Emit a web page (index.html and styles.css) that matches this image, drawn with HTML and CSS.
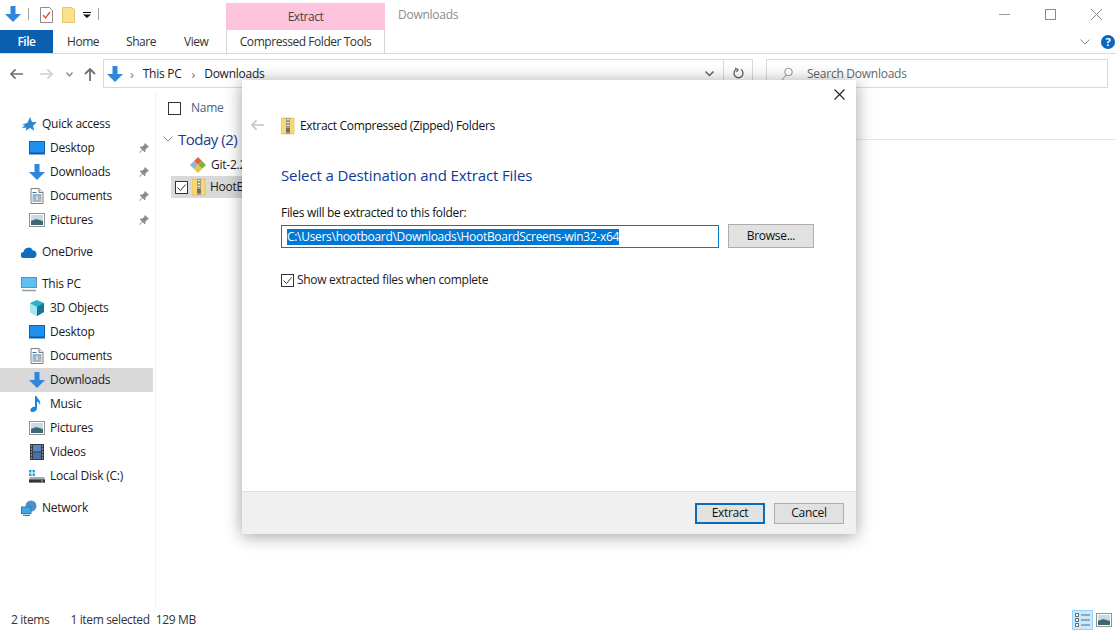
FILE: index.html
```html
<!DOCTYPE html>
<html lang="en">
<head>
<meta charset="utf-8">
<title>Downloads</title>
<link rel="stylesheet" href="styles.css">
</head>
<body>
<svg class="defs" width="0" height="0" aria-hidden="true">
  <symbol id="down" viewBox="0 0 16 16"><path d="M5.500 0h5v8H16l-8 8-8-8h5.500z" fill="#2f86dc"/></symbol>
  <symbol id="desktop" viewBox="0 0 16 14"><rect x=".5" y=".5" width="15" height="12.500" fill="#1e90f0" stroke="#0a62b4"/><rect x="1" y="11.500" width="14" height="1.500" fill="#0d5aa6"/></symbol>
  <symbol id="docs" viewBox="0 0 13 16"><path d="M.5.500h8l4 4v11H.5z" fill="#fff" stroke="#7f7f7f"/><path d="M8.500.500v4h4" fill="#e8e8e8" stroke="#7f7f7f"/><path d="M2 4.500h4M2 7h9M2 9h4M7 9h4M2 11h4M7 11h4M2 13h9" stroke="#3d6f94"/></symbol>
  <symbol id="pics" viewBox="0 0 16 14"><rect x=".5" y=".5" width="15" height="13" fill="#fff" stroke="#8f9499"/><rect x="2" y="2" width="12" height="10" fill="#c7dbe6"/><path d="M2 8l5-2 7 2v4H2z" fill="#3f6870"/></symbol>
  <symbol id="pin" viewBox="0 0 12 12"><path d="M7 1l4 4-1 .6-1 .2-1.700 2.200.2 1.500-.8.800L4.500 8 1.500 11 1 10.500 4 7.500 1.700 5.300l.8-.8 1.500.2L6.200 3 6.400 2z" fill="#8d8d8d"/></symbol>
  <symbol id="zip" viewBox="0 0 14 18"><path d="M0 1h13v16H0z" fill="#f8d775" stroke="#dcb64e" stroke-width=".6"/><rect x="5" y="1" width="4" height="16" fill="#a39c86"/><path d="M6 2h2v1H6zM6 5h2v1H6zM6 8h2v1H6z" fill="#eee"/><rect x="5" y="11" width="4" height="4" fill="#756f5e"/></symbol>
  <symbol id="back" viewBox="0 0 14 12"><path d="M6 1L1 6l5 5M1 6h13" fill="none" stroke="currentColor" stroke-width="1.800"/></symbol>
</svg>

<header class="titlebar">
  <div class="qat">
    <svg class="qat-down" width="16" height="16"><use href="#down"/></svg>
    <span class="qat-sep"></span>
    <svg class="qat-props" width="13" height="16" viewBox="0 0 13 16"><path d="M.5.500h9l3 3v12H.5z" fill="#fff" stroke="#8a8a8a"/><path d="M3 8l2.500 3L10 5" fill="none" stroke="#d9502a" stroke-width="1.300"/></svg>
    <svg class="qat-folder" width="13" height="16" viewBox="0 0 13 16"><path d="M.5.500h9l3 2v13H.5z" fill="#fbe08f" stroke="#e6c56a"/></svg>
    <svg class="qat-drop" width="8" height="6" viewBox="0 0 8 6"><path d="M0 0h8v1H0zM0 2.500h8L4 6z" fill="#111"/></svg>
    <span class="qat-sep second"></span>
  </div>
  <div class="context-tab">Extract</div>
  <div class="window-title">Downloads</div>
  <div class="controls">
    <svg width="11" height="11" viewBox="0 0 11 11"><path d="M0 5.500h11" stroke="#9a9a9a"/></svg>
    <svg width="11" height="11" viewBox="0 0 11 11"><rect x=".5" y=".5" width="10" height="10" fill="none" stroke="#8a8a8a"/></svg>
    <svg width="11" height="11" viewBox="0 0 11 11"><path d="M0 0l11 11M11 0L0 11" stroke="#8a8a8a"/></svg>
  </div>
</header>

<nav class="ribbon">
  <div class="tab tab-file">File</div>
  <div class="tab tab-home">Home</div>
  <div class="tab tab-share">Share</div>
  <div class="tab tab-view">View</div>
  <div class="tab tab-context">Compressed Folder Tools</div>
  <div class="ribbon-end">
    <svg width="10" height="6" viewBox="0 0 10 6"><path d="M.5.500L5 5 9.500.500" fill="none" stroke="#8a8a8a"/></svg>
    <span class="help">?</span>
  </div>
</nav>

<section class="addressrow">
  <svg class="nav-arrow back" width="13" height="12"><use href="#back"/></svg>
  <svg class="nav-arrow fwd" width="13" height="12" viewBox="0 0 14 12"><path d="M8 1l5 5-5 5M13 6H0" fill="none" stroke="#d0d0d0" stroke-width="1.800"/></svg>
  <svg class="recent" width="7" height="5" viewBox="0 0 7 5"><path d="M.5.500L3.500 4l3-3.500" fill="none" stroke="#888" stroke-width="1.300"/></svg>
  <svg class="up" width="12" height="13" viewBox="0 0 12 13"><path d="M1 6l5-5 5 5M6 1v12" fill="none" stroke="#707070" stroke-width="1.800"/></svg>
  <div class="address">
    <svg class="addr-icon" width="16" height="16"><use href="#down"/></svg>
    <span class="crumb-sep">›</span><span class="crumb">This PC</span>
    <span class="crumb-sep">›</span><span class="crumb">Downloads</span>
    <span class="addr-spacer"></span>
    <svg class="addr-chevron" width="9" height="6" viewBox="0 0 9 6"><path d="M.5.500L4.500 4.500 8.500.500" fill="none" stroke="#666" stroke-width="1.500"/></svg>
    <span class="refresh">
      <svg width="11" height="13" viewBox="0 0 11 13"><path d="M3 2.500a4.500 4.500 0 1 0 5 0M2 1l3 1.700L3.500 5" fill="none" stroke="#666" stroke-width="1.300"/></svg>
    </span>
  </div>
  <div class="search">
    <svg width="12" height="14" viewBox="0 0 12 14"><circle cx="7.500" cy="5" r="3.800" fill="none" stroke="#999"/><path d="M5 8l-4 5" stroke="#999"/></svg>
    <span>Search Downloads</span>
  </div>
</section>

<main class="main">
  <aside class="tree">
    <div class="group">
      <div class="row top"><svg width="16" height="15" viewBox="0 0 16 15"><path d="M9 0l2 5 5 .300-4 3.400 1.300 5-4.300-2.700-4.300 2.700.6-3H1l3-3H0.500l6-2z" fill="#2c87d3"/></svg><span>Quick access</span></div>
      <div class="row"><svg width="16" height="14"><use href="#desktop"/></svg><span>Desktop</span><svg class="pin" width="12" height="12"><use href="#pin"/></svg></div>
      <div class="row"><svg width="16" height="16"><use href="#down"/></svg><span>Downloads</span><svg class="pin" width="12" height="12"><use href="#pin"/></svg></div>
      <div class="row"><svg width="16" height="16"><use href="#docs"/></svg><span>Documents</span><svg class="pin" width="12" height="12"><use href="#pin"/></svg></div>
      <div class="row"><svg width="16" height="14"><use href="#pics"/></svg><span>Pictures</span><svg class="pin" width="12" height="12"><use href="#pin"/></svg></div>
    </div>
    <div class="group">
      <div class="row top"><svg width="16" height="11" viewBox="0 0 16 11"><path d="M3 11a3 3 0 0 1-.5-6A5 5 0 0 1 12 3.500 3.800 3.800 0 0 1 12.500 11z" fill="#0f6cc0"/></svg><span>OneDrive</span></div>
    </div>
    <div class="group">
      <div class="row top"><svg width="16" height="15" viewBox="0 0 16 15"><rect x=".5" y=".5" width="15" height="10" fill="#5cc0f0" stroke="#6f8ea3"/><path d="M1 13.500h14" stroke="#8fa0ab" stroke-width="1.500"/></svg><span>This PC</span></div>
      <div class="row"><svg width="16" height="16" viewBox="0 0 16 16"><path d="M8 0l7 3v9l-7 4-7-4V3z" fill="#23b4c8"/><path d="M8 7L1 3v9l7 4z" fill="#a8e4ea"/><path d="M8 7l7-4v9l-7 4z" fill="#127a94"/></svg><span>3D Objects</span></div>
      <div class="row"><svg width="16" height="14"><use href="#desktop"/></svg><span>Desktop</span></div>
      <div class="row"><svg width="16" height="16"><use href="#docs"/></svg><span>Documents</span></div>
      <div class="row selected"><svg width="16" height="16"><use href="#down"/></svg><span>Downloads</span></div>
      <div class="row"><svg width="16" height="16" viewBox="0 0 16 16"><path d="M6 0h1.500c.5 3 5 4 3.500 9-.5-2-2-3-3-3.500V12c0 2.500-2 4-4.500 4S1 14 2 12.500 5 10.500 6 11z" fill="#1c86dc"/></svg><span>Music</span></div>
      <div class="row"><svg width="16" height="14"><use href="#pics"/></svg><span>Pictures</span></div>
      <div class="row"><svg width="16" height="16" viewBox="0 0 14 16"><rect width="14" height="16" fill="#3a3a3a"/><rect x="3" y="1" width="8" height="6.500" fill="#5a85c8"/><rect x="3" y="8.500" width="8" height="6.500" fill="#4a6fb0"/><path d="M1 2h1M1 5h1M1 8h1M1 11h1M1 14h1M12 2h1M12 5h1M12 8h1M12 11h1M12 14h1" stroke="#ddd"/></svg><span>Videos</span></div>
      <div class="row"><svg width="16" height="14" viewBox="0 0 16 14"><path d="M0 1h2.500v2.500H0zM3.500 1H6v2.500H3.500zM0 4.500h2.500V7H0zM3.500 4.500H6V7H3.500z" fill="#27a0e0"/><path d="M1 8h14l1 2v3.500H0V10z" fill="#a8acaf"/><rect y="10.500" width="16" height="3" fill="#333"/><rect x="12" y="11.500" width="2" height="1" fill="#9ce"/></svg><span>Local Disk (C:)</span></div>
    </div>
    <div class="group">
      <div class="row top"><svg width="16" height="16" viewBox="0 0 16 16"><circle cx="10" cy="6" r="5.500" fill="#4f8fc8"/><rect x=".5" y="7" width="9.500" height="6.500" fill="#3ea6e6" stroke="#2b7fb8"/><path d="M2 15.500h7" stroke="#2b7fb8" stroke-width="1.500"/></svg><span>Network</span></div>
    </div>
  </aside>

  <div class="files">
    <div class="colhead"><span class="box"></span><span>Name</span></div>
    <div class="grouphead">
      <svg width="10" height="6" viewBox="0 0 10 6"><path d="M.5.500L5 5 9.500.500" fill="none" stroke="#8a8a8a"/></svg>
      <span>Today (2)</span>
      <span class="rule"></span>
    </div>
    <div class="entry">
      <svg width="16" height="16" viewBox="0 0 16 16"><path d="M8 0l4 4-4 4-4-4z" fill="#e2643c"/><path d="M4 4l4 4-4 4-4-4z" fill="#8fb3d8"/><path d="M12 4l4 4-4 4-4-4z" fill="#7cb342"/><path d="M8 8l4 4-4 4-4-4z" fill="#e8c542"/></svg>
      <span>Git-2.2</span>
    </div>
    <div class="entry chosen">
      <svg width="13" height="13" viewBox="0 0 13 13"><rect x=".5" y=".5" width="12" height="12" fill="#fff" stroke="#333"/><path d="M2.500 6.500l3 3 5-6" fill="none" stroke="#333"/></svg>
      <svg width="14" height="18"><use href="#zip"/></svg>
      <span>HootB</span>
    </div>
  </div>
</main>

<footer class="status">
  <span class="count">2 items</span>
  <span class="sel">1 item selected</span>
  <span>129 MB</span>
  <div class="views">
    <span class="view-details">
      <svg width="16" height="14" viewBox="0 0 16 14"><path d="M.5.500h3v3h-3zM.5 5.500h3v3h-3zM.5 10.500h3v3h-3z" fill="#fff" stroke="#5a6a75"/><path d="M6 2h9M6 7h9M6 12h9" stroke="#5a6a75"/></svg>
    </span>
    <svg width="16" height="14"><use href="#pics"/></svg>
  </div>
</footer>

<div class="dialog" role="dialog">
  <div class="dlg-body">
    <div class="dlg-close">
      <svg width="11" height="11" viewBox="0 0 11 11"><path d="M.5.500l10 10M10.500.500l-10 10" stroke="#222" stroke-width="1.100"/></svg>
    </div>
    <div class="dlg-title">
      <svg class="dlg-back" width="13" height="12"><use href="#back"/></svg>
      <svg width="14" height="18"><use href="#zip"/></svg>
      <span>Extract Compressed (Zipped) Folders</span>
    </div>
    <h1 class="dlg-heading">Select a Destination and Extract Files</h1>
    <div class="dlg-label">Files will be extracted to this folder:</div>
    <div class="dlg-path">
      <div class="path-input"><span class="path-sel">C:\Users\hootboard\Downloads\HootBoardScreens-win32-x64</span></div>
      <button class="btn browse" type="button">Browse...</button>
    </div>
    <div class="dlg-check">
      <svg width="13" height="13" viewBox="0 0 13 13"><rect x=".5" y=".5" width="12" height="12" fill="#fff" stroke="#333"/><path d="M2.500 6.500l3 3 5-6" fill="none" stroke="#333"/></svg>
      <span>Show extracted files when complete</span>
    </div>
  </div>
  <div class="dlg-foot">
    <button class="btn primary" type="button">Extract</button>
    <button class="btn" type="button">Cancel</button>
  </div>
</div>
</body>
</html>
```

FILE: styles.css
```css
* { box-sizing: border-box; }
html, body { margin: 0; height: 100%; }
body {
  width: 1116px;
  height: 630px;
  overflow: hidden;
  display: flex;
  flex-direction: column;
  background: #fff;
  color: #1a1a1a;
  font: 12px/16px "Open Sans", "Noto Sans", sans-serif;
  letter-spacing: -0.25px;
}
svg { display: block; flex: none; }
.defs { position: absolute; }

/* title bar */
.titlebar { height: 30px; display: flex; flex: none; }
.qat { width: 226px; display: flex; align-items: center; padding-left: 5px; }
.qat-down { margin-top: -2px; }
.qat-sep { width: 1px; height: 12px; background: #a0a0a0; margin-left: 7px; margin-top: -2px; }
.qat-sep.second { margin-left: 7px; }
.qat-props { margin-left: 11px; }
.qat-folder { margin-left: 9px; }
.qat-drop { margin-left: 8px; }
.context-tab {
  width: 159px; height: 27px; margin-top: 3px;
  background: #ffc4dd; color: #444; text-align: center; line-height: 28px;
  letter-spacing: -0.45px;
}
.window-title { margin-left: 13px; line-height: 30px; color: #8c8c8c; }
.controls { margin-left: auto; display: flex; gap: 35px; padding: 9px 14px 0 0; }

/* ribbon */
.ribbon { height: 24px; flex: none; display: flex; border-bottom: 1px solid #dadada; }
.tab { line-height: 24px; color: #333; letter-spacing: -0.45px; }
.tab-file { width: 53px; background: #0a5fb0; color: #fff; text-align: center; font-weight: 600; }
.tab-home { margin-left: 14px; width: 31px; }
.tab-share { margin-left: 28px; width: 30px; }
.tab-view { margin-left: 28px; width: 26px; }
.tab-context {
  margin-left: 16px; width: 159px; text-align: center; height: 23px;
  border-left: 1px solid #d5d5d5; border-right: 1px solid #d5d5d5;
}
.ribbon-end { margin-left: auto; display: flex; align-items: center; gap: 11px; padding-right: 1px; }
.help {
  width: 14px; height: 14px; border-radius: 50%; background: #0a68c0; color: #fff;
  font-size: 11px; font-weight: 700; line-height: 14px; text-align: center;
}

/* address */
.addressrow { height: 38px; flex: none; display: flex; align-items: flex-start; padding: 5px 8px 0 10px; }
.nav-arrow { margin-top: 9px; color: #707070; }
.nav-arrow.fwd { margin-left: 17px; }
.recent { margin: 13px 0 0 13px; }
.up { margin: 9px 0 0 11px; }
.address {
  width: 650px; height: 29px; margin-left: 7px;
  display: flex; align-items: center;
  border: 1px solid #d9d9d9; padding-left: 3px; color: #222;
}
.crumb-sep { color: #777; margin: 0 9px 0 7px; font-size: 13px; }
.crumb + .crumb-sep { margin-left: 10px; }
.addr-spacer { flex: 1; }
.addr-chevron { margin-right: 9px; }
.refresh {
  width: 29px; height: 27px; border-left: 1px solid #d9d9d9;
  display: flex; align-items: center; justify-content: center;
}
.search {
  width: 342px; height: 29px; margin-left: 13px;
  display: flex; align-items: center; gap: 14px; padding-left: 14px;
  border: 1px solid #d9d9d9; color: #666;
}

/* main */
.main { flex: 1; display: flex; min-height: 0; }
.tree { width: 156px; flex: none; border-right: 1px solid #f1f1f1; padding-top: 20px; }
.group { margin-bottom: 8px; }
.row { height: 24px; width: 153px; display: flex; align-items: center; padding-left: 29px; color: #1a1a1a; }
.row > span { margin-left: 5px; flex: 1; white-space: nowrap; }
.row.top { padding-left: 21px; }
.row.selected { background: #d9d9d9; }
.pin { margin-right: 3px; }
.files { flex: 1; min-width: 0; padding-left: 6px; }
.colhead { height: 32px; display: flex; align-items: center; padding-left: 6px; gap: 10px; color: #4c607a; }
.box { width: 13px; height: 13px; border: 1px solid #333; }
.grouphead {
  height: 26px; margin: 2px 0; display: flex; align-items: center;
  color: #1e3a8a; font-size: 15px; line-height: 20px; letter-spacing: -0.5px;
}
.grouphead svg { margin: 0 5px 0 1px; }
.grouphead .rule { flex: 1; height: 1px; background: #e6e6e6; margin-left: 8px; }
.entry { height: 22px; display: flex; align-items: center; padding-left: 28px; gap: 5px; white-space: nowrap; }
.entry.chosen { margin-left: 9px; padding-left: 4px; width: 80px; background: #d9d9d9; gap: 4px; }

/* status */
.status {
  height: 22px; flex: none; display: flex; align-items: center;
  padding: 2px 4px 0 11px; color: #333; letter-spacing: -0.35px;
}
.count { margin-right: 21px; }
.sel { margin-right: 6px; }
.views { margin-left: auto; display: flex; align-items: center; gap: 3px; }
.view-details {
  width: 21px; height: 20px; background: #cce8ff; border: 1px solid #99d1ff;
  display: flex; align-items: center; justify-content: center;
}

/* dialog */
.dialog {
  position: absolute; left: 242px; top: 80px; width: 614px; height: 454px;
  display: flex; flex-direction: column; background: #fff;
  box-shadow: 0 2px 16px rgba(0, 0, 0, .38);
  letter-spacing: -0.3px;
}
.dlg-body { flex: 1; position: relative; padding: 36px 42px 0 39px; }
.dlg-close { position: absolute; right: 11px; top: 9px; }
.dlg-title { display: flex; align-items: center; gap: 5px; height: 20px; color: #111; }
.dlg-back { position: absolute; left: 9px; top: 39px; color: #c4c4c4; }
.dlg-heading {
  margin: 29px 0 0; font-size: 15px; line-height: 20px; font-weight: 400;
  color: #0f3a96; letter-spacing: -0.12px;
}
.dlg-label { margin-top: 20px; color: #111; }
.dlg-path { display: flex; align-items: center; gap: 9px; margin-top: 3px; }
.path-input {
  width: 438px; height: 23px; border: 1px solid #0a78c8;
  padding: 3px 0 0 5px; white-space: nowrap; overflow: hidden;
}
.path-sel { display: inline-block; background: #0078d7; color: #fff; line-height: 16px; }
.btn {
  font: inherit; letter-spacing: inherit; color: #111;
  width: 70px; height: 21px; padding: 0;
  background: #e1e1e1; border: 1px solid #adadad;
}
.btn.browse { width: 86px; height: 24px; }
.btn.primary { border: 2px solid #0a6cb8; }
.dlg-check { display: flex; align-items: center; gap: 3px; margin-top: 24px; }
.dlg-foot {
  height: 43px; flex: none; display: flex; justify-content: flex-end; align-items: center;
  gap: 9px; padding: 0 12px 0 0; background: #f0f0f0; border-top: 1px solid #dfdfdf;
}
```
